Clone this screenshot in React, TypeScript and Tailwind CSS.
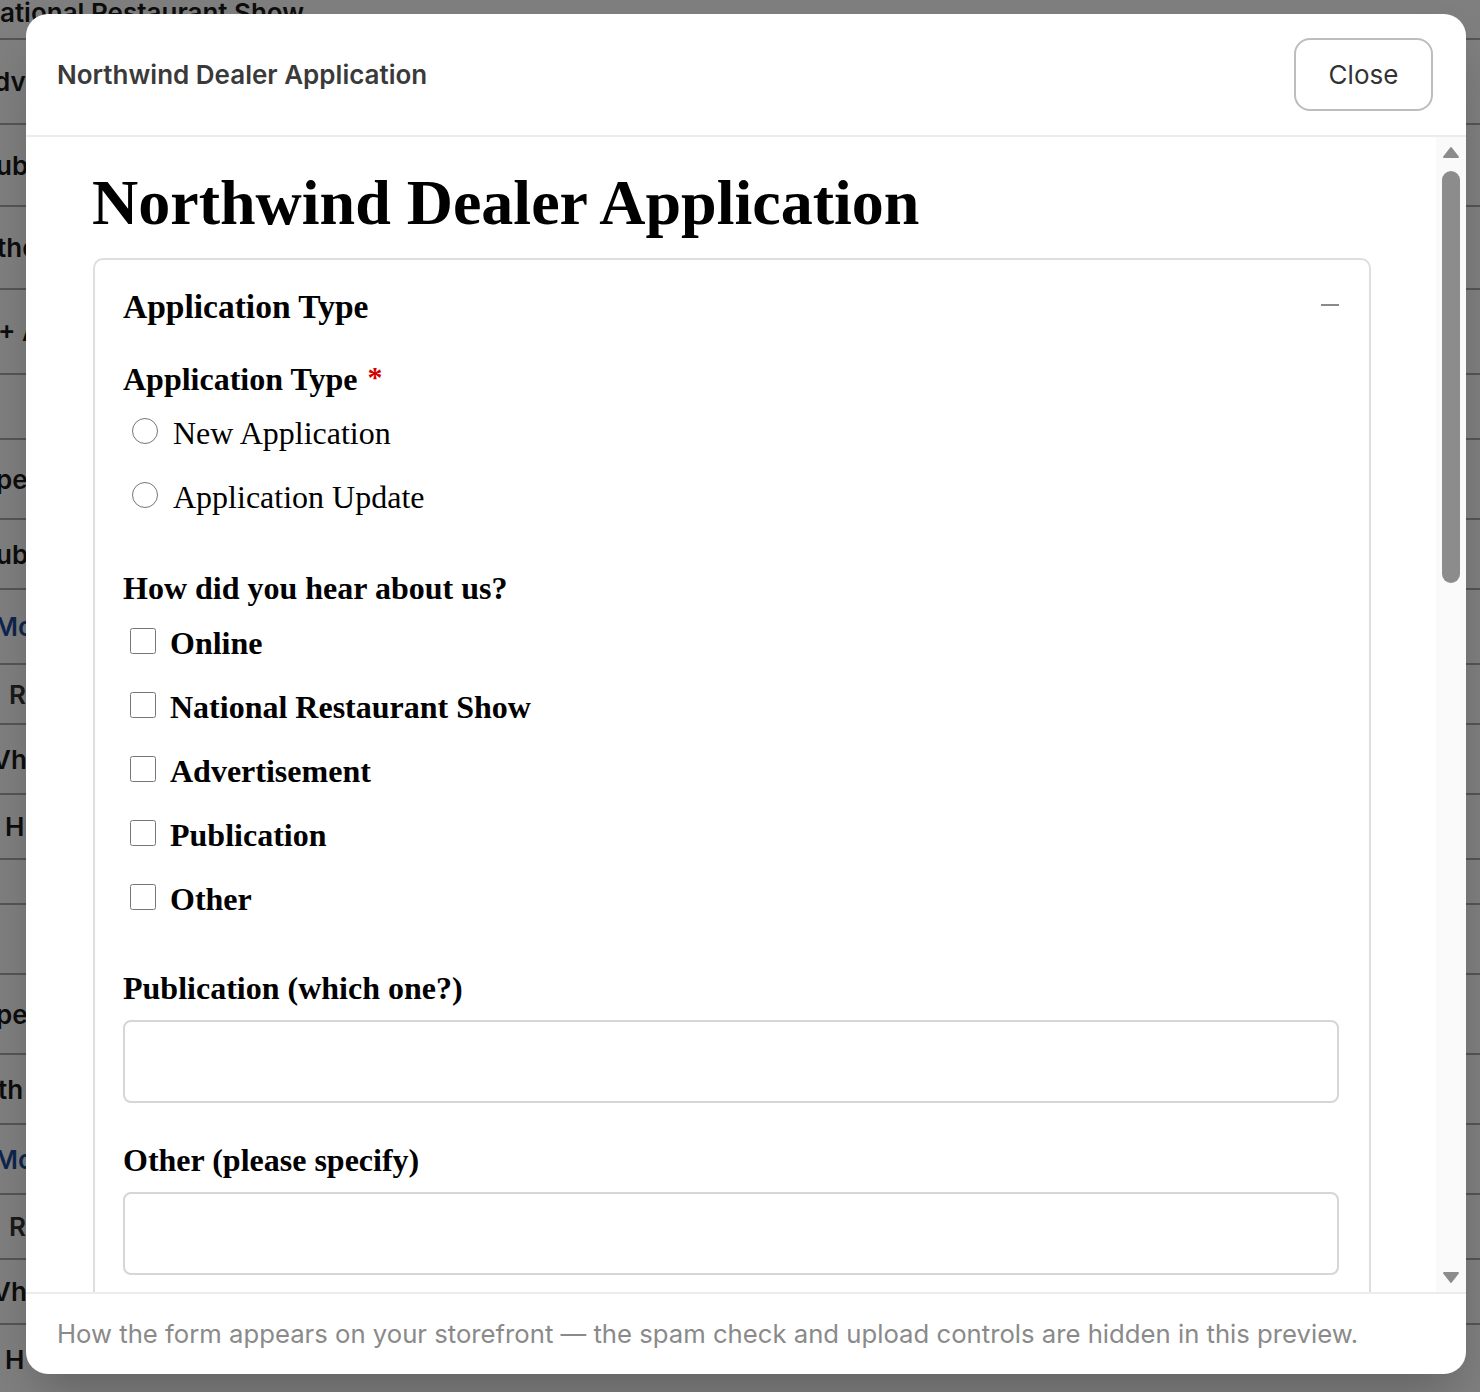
import React from "react";

const bgRows = [
    { h: 40, text: "ational Restaurant Show", cls: "text-[#1a1a1a] -mt-[14px]" },
    { h: 85, text: "dvertisement", cls: "text-[#1a1a1a] -ml-[6px]" },
    { h: 82, text: "ublication", cls: "text-[#1a1a1a] -ml-[4px]" },
    { h: 83, text: "ther", cls: "text-[#1a1a1a] -ml-[3px]" },
    { h: 85, text: "+ Add option", cls: "text-[#1a1a1a] -ml-[2px]" },
    { h: 65, text: "", cls: "" },
    { h: 80, text: "pe", cls: "text-[#1a1a1a] -ml-[4px]" },
    { h: 70, text: "ub", cls: "text-[#1a1a1a] -ml-[4px]" },
    { h: 75, text: "Mo", cls: "text-[#1d4c9a] -ml-[6px]" },
    { h: 60, text: "R", cls: "text-[#333] ml-[9px] font-normal" },
    { h: 70, text: "Vh", cls: "text-[#1a1a1a] -ml-[8px]" },
    { h: 65, text: "H", cls: "text-[#1a1a1a] ml-[5px]" },
    { h: 45, text: "", cls: "" },
    { h: 70, text: "", cls: "" },
    { h: 80, text: "pe", cls: "text-[#1a1a1a] -ml-[4px]" },
    { h: 70, text: "th", cls: "text-[#1a1a1a] -ml-[2px]" },
    { h: 70, text: "Mo", cls: "text-[#1d4c9a] -ml-[6px]" },
    { h: 65, text: "R", cls: "text-[#333] ml-[9px] font-normal" },
    { h: 65, text: "Vh", cls: "text-[#1a1a1a] -ml-[8px]" },
    { h: 70, text: "H", cls: "text-[#1a1a1a] ml-[5px]" },
];

const sources = ["Online", "National Restaurant Show", "Advertisement", "Publication", "Other"];

function Triangle({ up }: { up: boolean }) {
    return (
        <svg width="18" height="14" viewBox="0 0 18 14">
            <polygon
                points={up ? "9,2 16,11 2,11" : "2,3 16,3 9,12"}
                fill="#8c8c8c"
                stroke="#8c8c8c"
                strokeWidth="2"
                strokeLinejoin="round"
            />
        </svg>
    );
}

export default function App() {
    return (
        <div className="relative w-[1480px] h-[1392px] overflow-hidden bg-white font-['Inter',sans-serif]">
            {/* page behind the dialog */}
            <div className="flex flex-col">
                {bgRows.map((r, i) => (
                    <div
                        key={i}
                        className="flex items-center border-b-2 border-[#aaa] overflow-hidden whitespace-nowrap"
                        style={{ height: r.h }}
                    >
                        <span className={`text-[26px] font-semibold ${r.cls}`}>{r.text}</span>
                    </div>
                ))}
            </div>

            {/* overlay + dialog */}
            <div className="absolute inset-0 bg-black/50 pl-[26px] pt-[14px]">
                <div className="w-[1440px] h-[1360px] bg-white rounded-[22px] shadow-2xl flex flex-col overflow-hidden">
                    {/* header */}
                    <div className="h-[123px] shrink-0 border-b-2 border-[#ececec] flex items-center justify-between pl-[31px] pr-[33px]">
                        <span className="text-[26px] font-semibold text-[#3a3a3a]">Northwind Dealer Application</span>
                        <button className="w-[139px] h-[73px] border-2 border-[#bdbdbd] rounded-[16px] text-[26px] text-[#333] bg-white">
                            Close
                        </button>
                    </div>

                    {/* body */}
                    <div className="flex-1 min-h-0 flex">
                        <div className="flex-1 min-w-0 overflow-hidden pl-[67px] pr-[65px] pt-[30px] font-['Liberation_Serif',Times,serif] text-black">
                            <h1 className="text-[64px] leading-[72px] font-bold -ml-[1px]">Northwind Dealer Application</h1>

                            <div className="mt-[19px] border-2 border-[#dedede] rounded-[10px] pl-[28px] pr-[30px] pt-[27px] pb-[40px]">
                                <div className="h-[40px] flex items-center justify-between">
                                    <span className="text-[33.5px] font-bold">Application Type</span>
                                    <svg width="18" height="4" viewBox="0 0 18 4" className="-mt-[4px]">
                                        <rect x="0" y="1" width="18" height="2" fill="#8a8a8a" />
                                    </svg>
                                </div>

                                <div className="mt-[32px] h-[40px] flex items-center">
                                    <span className="text-[32px] font-bold">Application Type</span>
                                    <span className="ml-[10px] -mt-[6px] text-[30px] font-bold text-[#d40000]">*</span>
                                </div>

                                <div className="mt-[2px] flex flex-col">
                                    {["New Application", "Application Update"].map((t) => (
                                        <label key={t} className="h-[64px] flex items-center">
                                            <input type="radio" name="apptype" className="w-[26px] h-[26px] m-0 ml-[9px] mr-[15px] -mt-[4px]" />
                                            <span className="text-[32px]">{t}</span>
                                        </label>
                                    ))}
                                </div>

                                <div className="mt-[39px] h-[40px] flex items-center">
                                    <span className="text-[32px] font-bold">How did you hear about us?</span>
                                </div>

                                <div className="mt-[3px] flex flex-col">
                                    {sources.map((t) => (
                                        <label key={t} className="h-[64px] flex items-center">
                                            <input type="checkbox" className="w-[26px] h-[26px] m-0 ml-[7px] mr-[14px] -mt-[4px]" />
                                            <span className="text-[32px] font-bold">{t}</span>
                                        </label>
                                    ))}
                                </div>

                                <div className="mt-[37px] h-[40px] flex items-center">
                                    <span className="text-[32px] font-bold">Publication (which one?)</span>
                                </div>
                                <input type="text" className="mt-[12px] block w-full h-[83px] border-2 border-[#d6d6d6] rounded-[8px]" />

                                <div className="mt-[37px] h-[40px] flex items-center">
                                    <span className="text-[32px] font-bold">Other (please specify)</span>
                                </div>
                                <input type="text" className="mt-[12px] block w-full h-[83px] border-2 border-[#d6d6d6] rounded-[8px]" />
                            </div>
                        </div>

                        {/* scrollbar */}
                        <div className="w-[30px] shrink-0 bg-[#fafafa] flex flex-col items-center pt-[9px] pb-[8px]">
                            <Triangle up />
                            <div className="mt-[11px] w-[18px] h-[412px] rounded-full bg-[#8c8c8c]" />
                            <div className="flex-1" />
                            <Triangle up={false} />
                        </div>
                    </div>

                    {/* footer */}
                    <div className="h-[82px] shrink-0 border-t-2 border-[#ececec] flex items-center pl-[31px]">
                        <span className="text-[25.7px] text-[#8a8a8a]">
                            How the form appears on your storefront — the spam check and upload controls are hidden in this preview.
                        </span>
                    </div>
                </div>
            </div>
        </div>
    );
}
